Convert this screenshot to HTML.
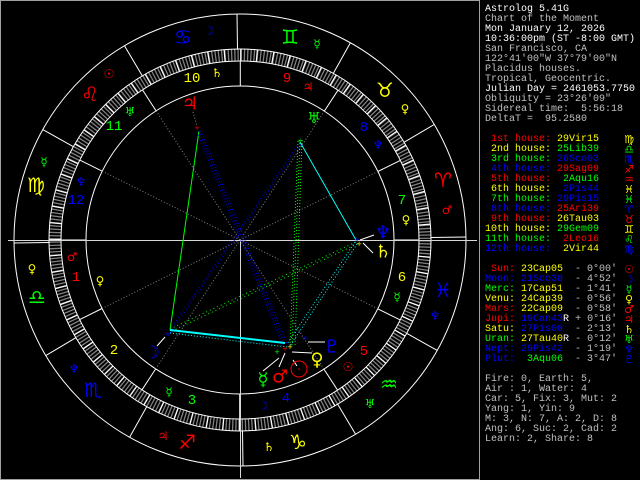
<!DOCTYPE html>
<html><head><meta charset="utf-8"><style>
html,body{margin:0;padding:0;background:#000;width:640px;height:480px;overflow:hidden}
#c{position:absolute;left:0;top:0}
.t{position:absolute;left:485px;font:10px/10px "Liberation Mono",monospace;white-space:pre;color:#c0c0c0}
.w{color:#fff}.r{color:#f00}.y{color:#ff0}.g{color:#0f0}.b{color:#00f}.gr{color:#c0c0c0}
.gl{position:absolute;left:622px;width:14px;text-align:center;font:11px/10px "DejaVu Sans",sans-serif}
</style></head><body>
<svg id="c" width="640" height="480" xmlns="http://www.w3.org/2000/svg" font-family="DejaVu Sans, sans-serif">
<rect x="0.5" y="0.5" width="479" height="479" fill="none" stroke="#a0a0a0"/>
<!-- tick ring -->
<circle cx="240" cy="240" r="185" fill="none" stroke="#808080" stroke-width="12" stroke-dasharray="1.3 1.93"/>
<circle cx="240" cy="240" r="185" fill="none" stroke="#fff" stroke-width="12" stroke-dasharray="1.2 14.94"/>
<g fill="none" stroke="#fff" stroke-width="1">
<circle cx="240" cy="240" r="226"/>
<circle cx="240" cy="240" r="191"/>
<circle cx="240" cy="240" r="179"/>
<circle cx="240" cy="240" r="154"/>
<!-- sign cusps -->
<path d="M431,237.5L466,237M404,142.3L434.2,124.5M333.3,73.4L350.4,42.8M237.5,49L237,14M142.3,75.9L124.5,45.8M73.4,146.7L42.8,129.6M49,242.5L14,243M75.9,337.7L45.8,355.6M146.7,406.7L129.6,437.2M242.5,431L243,466M337.7,404.2L355.6,434.2M406.7,333.3L437.2,350.4"/>
<!-- house cusps -->
<path d="M86,240L61,240M102.1,308.5L79.7,319.6M155.7,368.9L142,389.8M239.7,394L239.7,419M323.9,369.1L337.6,390.1M377.8,308.8L400.2,319.9M394,240L419,240M377.9,171.5L400.3,160.4M324.3,111.1L338,90.2M240.3,86L240.3,61M156.1,110.9L142.5,89.9M102.2,171.2L79.8,160.1"/>
</g>
<g stroke="#808080" stroke-dasharray="1 2" fill="none">
<path d="M240,240L102.1,308.5M240,240L155.7,368.9M240,240L323.9,369.1M240,240L377.8,308.8M240,240L377.9,171.5M240,240L324.3,111.1M240,240L156.1,110.9M240,240L102.2,171.2M193,112L197,126"/>
</g>
<path d="M8,240.5H477M240.5,240V478" stroke="#d8d8d8" fill="none"/>
<!-- aspects -->
<g fill="none">
<path d="M199,131L170,330" stroke="#0f0"/>
<path d="M199,131L285,345M201,131L288,346M197,132L283,346" stroke="#00f" stroke-dasharray="1 2"/>
<path d="M167,334L300,142M168,336L301,144" stroke="#00f" stroke-dasharray="1 3"/>
<path d="M300,140L292,346M302,140L295,346M298,141L290,346" stroke="#0f0" stroke-dasharray="1 2"/>
<path d="M170,329L356,242M172,331L357,244" stroke="#0f0" stroke-dasharray="1 3"/>
<path d="M170,330L285,343" stroke="#0ff" stroke-width="2"/>
<path d="M170,333L287,347" stroke="#0ff" stroke-dasharray="1 2"/>
<path d="M300,142L356,240" stroke="#0ff"/>
<path d="M355,242L287,344M357,244L290,346" stroke="#0ff" stroke-dasharray="1 2"/>
<path d="M308,342H325M292,352L312,353M279,358L263,371M285,353L279,367M165,337L157,346M360,240L374,235M363,243L373,253M293,360L297,366" stroke="#fff"/>
</g>
<g font-size="7" text-anchor="middle" dominant-baseline="central">
<text x="197" y="128" fill="#f00">+</text>
<text x="277" y="352" fill="#0f0">+</text><text x="285" y="349" fill="#f00">+</text><text x="290" y="347" fill="#ff0">+</text><text x="305" y="338" fill="#00f">+</text>
<text x="167" y="334" fill="#00f">+</text><text x="357" y="240" fill="#00f">+</text><text x="359" y="244" fill="#ff0">+</text><text x="300" y="141" fill="#0f0">+</text>
</g>
<!-- planets -->
<g text-anchor="middle" dominant-baseline="central" font-size="18">
<text x="190" y="104" fill="#f00">♃</text>
<text x="314" y="118" fill="#0f0" font-size="15">♅</text>
<text x="383" y="233" fill="#00f">♆</text>
<text x="383" y="252" fill="#ff0">♄</text>
<text x="332" y="347" fill="#00f">♇</text>
<text x="317" y="360" fill="#ff0">♀</text>
<text x="280" y="377" fill="#f00">♂</text>
<text x="263" y="380" fill="#0f0">☿</text>
<text x="152" y="353" fill="#00f">☽</text>
</g>
<circle cx="299" cy="369" r="8" fill="none" stroke="#f00"/><circle cx="299" cy="369" r="0.8" fill="#f00"/>
<!-- house numbers -->
<g font-family="Liberation Mono, monospace" font-size="14" text-anchor="middle" dominant-baseline="central">
<text x="76" y="278" fill="#f00">1</text><text x="114" y="351" fill="#ff0">2</text><text x="192" y="401" fill="#0f0">3</text><text x="286" y="399" fill="#00f">4</text>
<text x="364" y="352" fill="#f00">5</text><text x="402" y="278" fill="#ff0">6</text><text x="402" y="201" fill="#0f0">7</text><text x="364" y="128" fill="#00f">8</text>
<text x="287" y="79" fill="#f00">9</text><text x="192" y="79" fill="#ff0">10</text><text x="114" y="127" fill="#0f0">11</text><text x="76" y="201" fill="#00f">12</text>
</g>
<!-- small glyphs -->
<g font-size="12" text-anchor="middle" dominant-baseline="central">
<text x="72" y="257" fill="#f00">♂</text><text x="100" y="281" fill="#ff0">♀</text><text x="169" y="392" fill="#0f0">☿</text><text x="263" y="406" fill="#00f">☽</text>
<text x="348" y="367" fill="#f00">☉</text><text x="397" y="297" fill="#0f0">☿</text><text x="406" y="220" fill="#ff0">♀</text><text x="378" y="145" fill="#00f">♆</text>
<text x="308" y="87" fill="#f00">♃</text><text x="217" y="73" fill="#ff0">♄</text><text x="130" y="112" fill="#0f0">♅</text><text x="81" y="182" fill="#00f">♆</text>
<text x="209" y="31" fill="#00f">☽</text><text x="317" y="44" fill="#0f0">☿</text><text x="405" y="109" fill="#ff0">♀</text><text x="447" y="210" fill="#f00">♂</text>
<text x="435" y="316" fill="#00f">♆</text><text x="370" y="404" fill="#0f0">♅</text><text x="269" y="447" fill="#ff0">♄</text><text x="163" y="436" fill="#f00">♃</text>
<text x="74" y="369" fill="#00f">♆</text><text x="32" y="269" fill="#ff0">♀</text><text x="44" y="162" fill="#0f0">☿</text><text x="109" y="74" fill="#f00">☉</text>
</g>
<g font-size="20" text-anchor="middle" dominant-baseline="central">
<text x="183" y="37" fill="#00f">♋&#xFE0E;</text><text x="290" y="37" fill="#0f0">♊&#xFE0E;</text><text x="385" y="90" fill="#ff0">♉&#xFE0E;</text><text x="443" y="180" fill="#f00">♈&#xFE0E;</text>
<text x="443" y="290" fill="#00f">♓&#xFE0E;</text><text x="389" y="384" fill="#0f0">♒&#xFE0E;</text><text x="298" y="442" fill="#ff0">♑&#xFE0E;</text><text x="187" y="442" fill="#f00">♐&#xFE0E;</text>
<text x="93" y="390" fill="#00f">♏&#xFE0E;</text><text x="37" y="297" fill="#0f0">♎&#xFE0E;</text><text x="36" y="185" fill="#ff0">♍&#xFE0E;</text><text x="90" y="94" fill="#f00">♌&#xFE0E;</text>
</g>
</svg>

<div class="t w" style="top:5px">Astrolog 5.41G</div>
<div class="t" style="top:15px">Chart of the Moment</div>
<div class="t w" style="top:25px">Mon January 12, 2026</div>
<div class="t w" style="top:35px">10:36:00pm (ST -8:00 GMT)</div>
<div class="t" style="top:45px">San Francisco, CA</div>
<div class="t" style="top:55px">122°41'00"W 37°79'00"N</div>
<div class="t" style="top:65px">Placidus houses.</div>
<div class="t" style="top:75px">Tropical, Geocentric.</div>
<div class="t w" style="top:85px">Julian Day = 2461053.7750</div>
<div class="t" style="top:95px">Obliquity = 23°26'09"</div>
<div class="t" style="top:105px">Sidereal time:  5:56:18</div>
<div class="t" style="top:115px">DeltaT =  95.2580</div>

<div class="t" style="top:135px"><span class="r"> 1st house:</span> <span class="y">29Vir15</span></div><div class="gl y" style="top:135px">♍&#xFE0E;</div>
<div class="t" style="top:145px"><span class="y"> 2nd house:</span> <span class="g">25Lib39</span></div><div class="gl g" style="top:145px">♎&#xFE0E;</div>
<div class="t" style="top:155px"><span class="g"> 3rd house:</span> <span class="b">26Sco03</span></div><div class="gl b" style="top:155px">♏&#xFE0E;</div>
<div class="t" style="top:165px"><span class="b"> 4th house:</span> <span class="r">29Sag09</span></div><div class="gl r" style="top:165px">♐&#xFE0E;</div>
<div class="t" style="top:175px"><span class="r"> 5th house:</span>  <span class="g">2Aqu16</span></div><div class="gl r" style="top:175px">♒&#xFE0E;</div>
<div class="t" style="top:185px"><span class="y"> 6th house:</span>  <span class="b">2Pis44</span></div><div class="gl y" style="top:185px">♓&#xFE0E;</div>
<div class="t" style="top:195px"><span class="g"> 7th house:</span> <span class="b">29Pis15</span></div><div class="gl g" style="top:195px">♓&#xFE0E;</div>
<div class="t" style="top:205px"><span class="b"> 8th house:</span> <span class="r">25Ari39</span></div><div class="gl b" style="top:205px">♈&#xFE0E;</div>
<div class="t" style="top:215px"><span class="r"> 9th house:</span> <span class="y">26Tau03</span></div><div class="gl r" style="top:215px">♉&#xFE0E;</div>
<div class="t" style="top:225px"><span class="y">10th house:</span> <span class="g">29Gem09</span></div><div class="gl y" style="top:225px">♊&#xFE0E;</div>
<div class="t" style="top:235px"><span class="g">11th house:</span>  <span class="r">2Leo16</span></div><div class="gl g" style="top:235px">♌&#xFE0E;</div>
<div class="t" style="top:245px"><span class="b">12th house:</span>  <span class="y">2Vir44</span></div><div class="gl b" style="top:245px">♍&#xFE0E;</div>

<div class="t" style="top:265px"><span class="r"> Sun:</span> <span class="y">23Cap05</span>  - 0°00'</div><div class="gl r" style="top:265px">☉</div>
<div class="t" style="top:275px"><span class="b">Moon:</span> <span class="b">21Sco38</span>  - 4°52'</div><div class="gl b" style="top:275px">☽</div>
<div class="t" style="top:285px"><span class="g">Merc:</span> <span class="y">17Cap51</span>  - 1°41'</div><div class="gl g" style="top:285px">☿</div>
<div class="t" style="top:295px"><span class="y">Venu:</span> <span class="y">24Cap39</span>  - 0°56'</div><div class="gl y" style="top:295px">♀</div>
<div class="t" style="top:305px"><span class="r">Mars:</span> <span class="y">22Cap09</span>  - 0°58'</div><div class="gl r" style="top:305px">♂</div>
<div class="t" style="top:315px"><span class="r">Jupi:</span> <span class="b">19Can43</span><span class="w">R</span> + 0°16'</div><div class="gl r" style="top:315px">♃</div>
<div class="t" style="top:325px"><span class="y">Satu:</span> <span class="b">27Pis00</span>  - 2°13'</div><div class="gl y" style="top:325px">♄</div>
<div class="t" style="top:335px"><span class="g">Uran:</span> <span class="y">27Tau40</span><span class="w">R</span> - 0°12'</div><div class="gl g" style="top:335px">♅</div>
<div class="t" style="top:345px"><span class="b">Nept:</span> <span class="b">29Pis42</span>  - 1°19'</div><div class="gl b" style="top:345px">♆</div>
<div class="t" style="top:355px"><span class="b">Plut:</span>  <span class="g">3Aqu06</span>  - 3°47'</div><div class="gl b" style="top:355px">♇</div>

<div class="t" style="top:375px">Fire: 0, Earth: 5,</div>
<div class="t" style="top:385px">Air : 1, Water: 4</div>
<div class="t" style="top:395px">Car: 5, Fix: 3, Mut: 2</div>
<div class="t" style="top:405px">Yang: 1, Yin: 9</div>
<div class="t" style="top:415px">M: 3, N: 7, A: 2, D: 8</div>
<div class="t" style="top:425px">Ang: 6, Suc: 2, Cad: 2</div>
<div class="t" style="top:435px">Learn: 2, Share: 8</div>
</body></html>
